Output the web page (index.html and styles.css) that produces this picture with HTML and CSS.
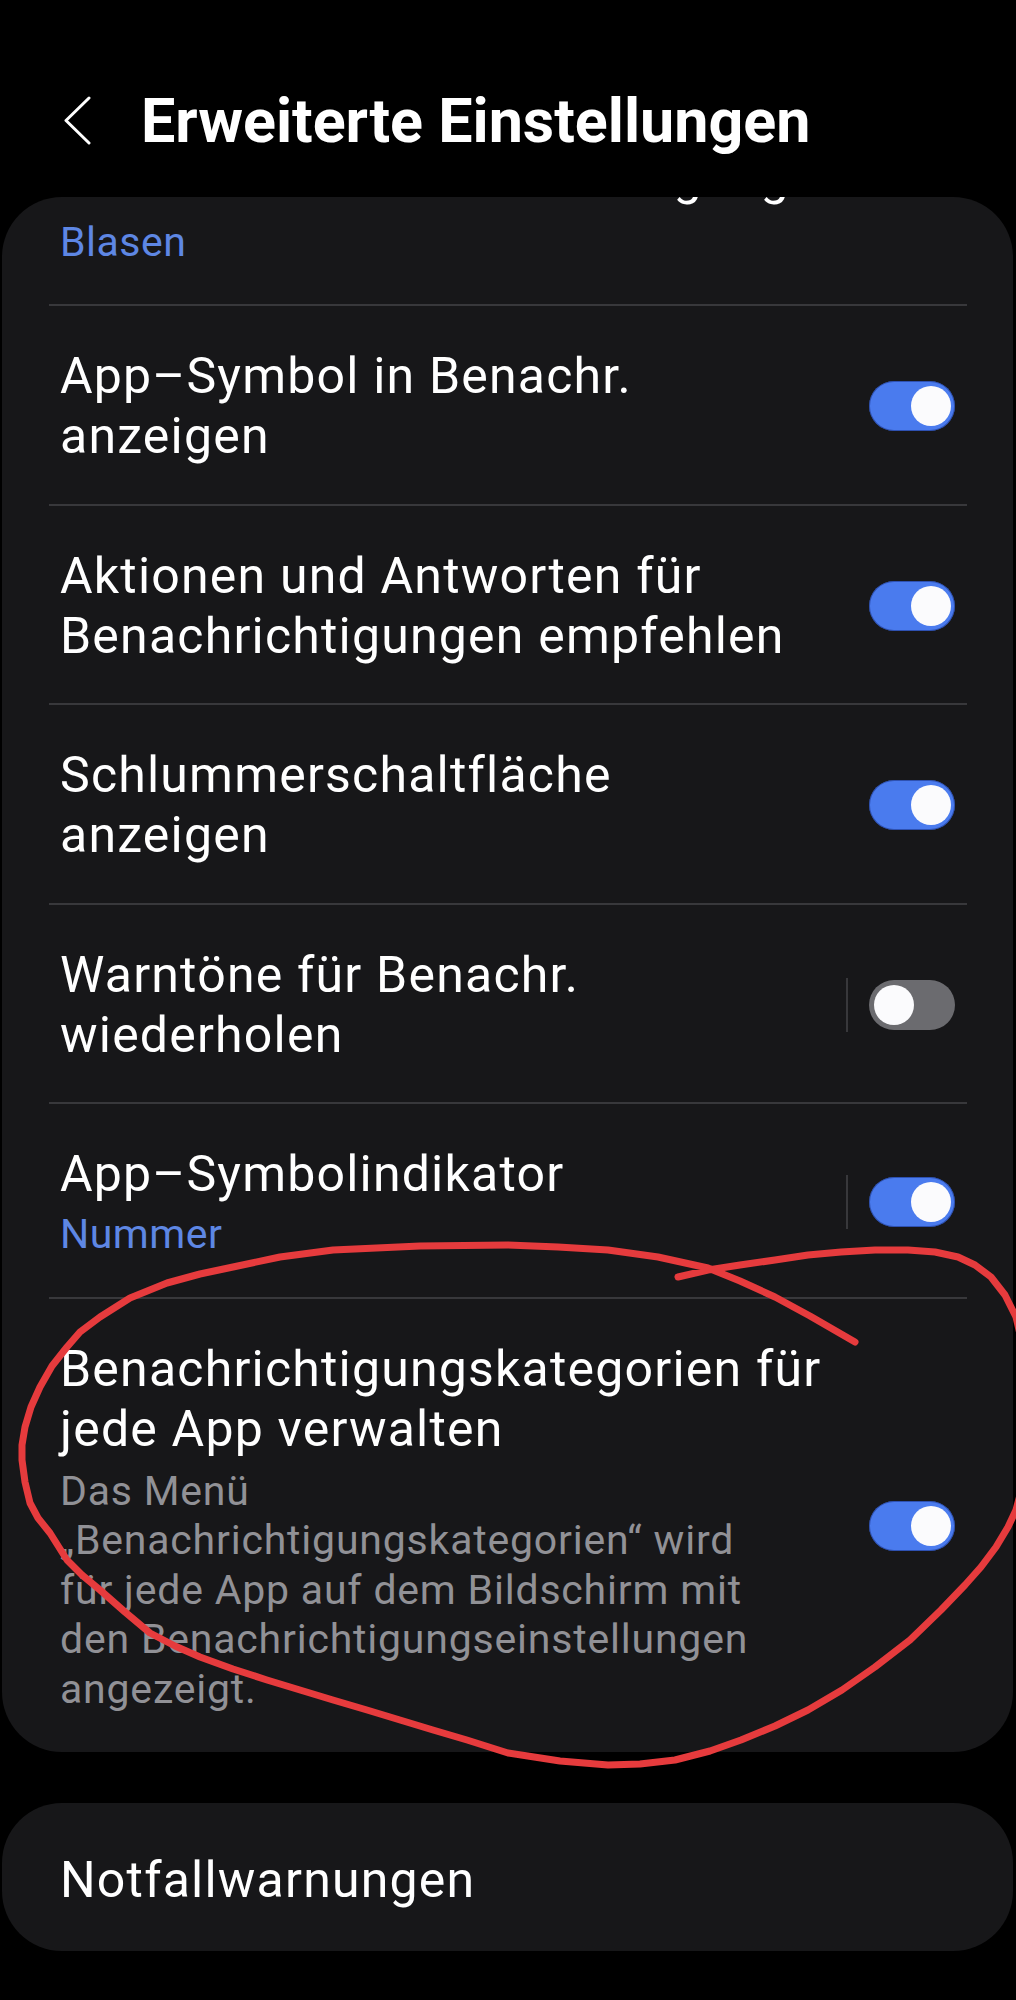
FILE: index.html
```html
<!DOCTYPE html>
<html lang="de">
<head>
<meta charset="utf-8">
<title>Erweiterte Einstellungen</title>
<link rel="stylesheet" href="styles.css">
</head>
<body>
<div class="screen">
  <header class="topbar">
    <svg class="back" viewBox="0 0 30 50" width="30" height="50" aria-hidden="true">
      <path d="M26 2 L3 24.5 L26 47" fill="none" stroke="#ffffff" stroke-width="3" stroke-linecap="round" stroke-linejoin="round"/>
    </svg>
    <h1 class="title">Erweiterte Einstellungen</h1>
  </header>

  <section class="card">
    <div class="row row-first">
      <div class="text">
        <div class="label">Unverankerte Benachrichtigungen</div>
        <div class="sub sub-first">Blasen</div>
      </div>
    </div>
    <div class="divider"></div>

    <div class="row">
      <div class="text">
        <div class="label">App–Symbol in Benachr.<br>anzeigen</div>
      </div>
      <span class="toggle on"><span class="knob"></span></span>
    </div>
    <div class="divider"></div>

    <div class="row">
      <div class="text">
        <div class="label">Aktionen und Antworten für<br>Benachrichtigungen empfehlen</div>
      </div>
      <span class="toggle on"><span class="knob"></span></span>
    </div>
    <div class="divider"></div>

    <div class="row">
      <div class="text">
        <div class="label">Schlummerschaltfläche<br>anzeigen</div>
      </div>
      <span class="toggle on"><span class="knob"></span></span>
    </div>
    <div class="divider"></div>

    <div class="row">
      <div class="text">
        <div class="label">Warntöne für Benachr.<br>wiederholen</div>
      </div>
      <span class="vsep"></span>
      <span class="toggle off"><span class="knob"></span></span>
    </div>
    <div class="divider"></div>

    <div class="row">
      <div class="text">
        <div class="label">App–Symbolindikator</div>
        <div class="sub">Nummer</div>
      </div>
      <span class="vsep"></span>
      <span class="toggle on"><span class="knob"></span></span>
    </div>
    <div class="divider"></div>

    <div class="row">
      <div class="text">
        <div class="label">Benachrichtigungskategorien für<br>jede App verwalten</div>
        <div class="desc">Das Menü<br>„Benachrichtigungskategorien“ wird<br>für jede App auf dem Bildschirm mit<br>den Benachrichtigungseinstellungen<br>angezeigt.</div>
      </div>
      <span class="toggle on"><span class="knob"></span></span>
    </div>
  </section>

  <section class="card card-single">
    <div class="row row-single">
      <div class="text">
        <div class="label">Notfallwarnungen</div>
      </div>
    </div>
  </section>

  <svg class="annotation" viewBox="0 0 1016 2000" width="1016" height="2000" aria-hidden="true">
    <polyline fill="none" stroke="#e63b3d" stroke-width="7" stroke-linecap="round" stroke-linejoin="round"
      points="855,1342 810,1316 775,1297 740,1281 708,1268 658,1257 608,1250 558,1247 508,1245 420,1246 333,1250 280,1257 233,1267 200,1274 167,1283 130,1298 100,1317 80,1332 67,1347 52,1366 40,1387 31,1407 25,1427 22,1445 22,1460 25,1482 30,1503 38,1518 50,1533 67,1560 82,1575 100,1590 125,1612 150,1633 175,1646 200,1657 233,1669 267,1680 300,1690 333,1700 367,1710 400,1720 433,1730 467,1740 508,1753 560,1761 608,1765 640,1764 675,1760 710,1751 741,1740 775,1726 808,1710 842,1690 875,1667 910,1640 941,1610 965,1585 981,1567 996,1547 1008,1527 1016,1510 1024,1480 1028,1420 1026,1360 1016,1317 1005,1295 991,1277 975,1265 958,1257 935,1252 908,1250 875,1250 841,1252 808,1255 775,1260 740,1265 708,1270 678,1277"/>
  </svg>
</div>
</body>
</html>
```

FILE: styles.css
```css
* { box-sizing: border-box; }

body {
  margin: 0;
  background: #000000;
  font-family: Roboto, "Noto Sans", "Liberation Sans", sans-serif;
  color: #ffffff;
}

.screen {
  position: relative;
  width: 1016px;
  height: 2000px;
  overflow: hidden;
}

.topbar {
  display: flex;
  align-items: center;
  padding: 83px 0 0 63px;
  height: 159px;
}

.back {
  flex: none;
  width: 30px;
  height: 50px;
  margin-right: 48px;
}

.title {
  margin: 0;
  font-size: 61px;
  font-weight: 700;
  line-height: 76px;
  white-space: nowrap;
}

.card {
  display: flex;
  flex-direction: column;
  margin: 38px 3px 0 2px;
  background: #171719;
  border-radius: 60px;
  overflow: hidden;
}

.card-single {
  margin-top: 51px;
}

.row {
  display: flex;
  align-items: center;
  padding: 40px 58px 37.5px 58px;
}

.row-first {
  margin-top: -50px;
  padding-top: 0;
  padding-bottom: 37px;
}

.row-single {
  padding-top: 47px;
  padding-bottom: 41px;
}

.text {
  flex: 1;
  min-width: 0;
}

.label {
  font-size: 50px;
  line-height: 60px;
  letter-spacing: 1.2px;
  white-space: nowrap;
}

.sub {
  margin-top: 5px;
  font-size: 41px;
  line-height: 50px;
  letter-spacing: 0.5px;
  color: #5e87e4;
}

.sub-first {
  margin-top: 10px;
}

.desc {
  margin-top: 8px;
  font-size: 41px;
  line-height: 49.5px;
  letter-spacing: 0.8px;
  color: #919196;
  white-space: nowrap;
}

.divider {
  flex: none;
  height: 2px;
  margin: 0 46px 0 47px;
  background: #38383b;
}

.vsep {
  flex: none;
  width: 2px;
  height: 54px;
  margin-right: 21px;
  background: #38383b;
}

.toggle {
  flex: none;
  display: flex;
  align-items: center;
  width: 86px;
  height: 50px;
  padding: 0 4px;
  border-radius: 25px;
}

.toggle.on {
  justify-content: flex-end;
  background: #4a7bee;
  box-shadow: inset 0 0 0 1px rgba(24, 48, 130, 0.55);
}

.toggle.off {
  justify-content: flex-start;
  padding-left: 5px;
  background: #6b6b6f;
}

.knob {
  width: 40px;
  height: 40px;
  border-radius: 50%;
  background: #fbfbfd;
}

.annotation {
  position: absolute;
  top: 0;
  left: 0;
  pointer-events: none;
}
```
